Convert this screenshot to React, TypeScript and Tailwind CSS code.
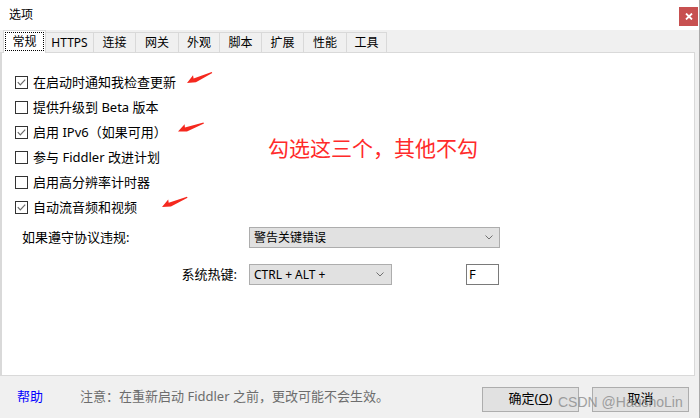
import React from "react";

const tabs: { label: string; w: number }[] = [
  { label: "HTTPS", w: 48 },
  { label: "连接", w: 42 },
  { label: "网关", w: 43 },
  { label: "外观", w: 41 },
  { label: "脚本", w: 42 },
  { label: "扩展", w: 42 },
  { label: "性能", w: 43 },
  { label: "工具", w: 40 },
];

const rows: { label: string; checked: boolean }[] = [
  { label: "在启动时通知我检查更新", checked: true },
  { label: "提供升级到 Beta 版本", checked: false },
  { label: "启用 IPv6（如果可用）", checked: true },
  { label: "参与 Fiddler 改进计划", checked: false },
  { label: "启用高分辨率计时器", checked: false },
  { label: "自动流音频和视频", checked: true },
];

function Box({ checked }: { checked: boolean }) {
  return (
    <span className="w-[13px] h-[13px] border border-[#333333] bg-white flex items-center justify-center shrink-0">
      {checked && (
        <svg width="11" height="11" viewBox="0 0 11 11">
          <path d="M1.8 5.2 L4.3 7.8 L9.2 2.6" stroke="#6a6a6a" strokeWidth="1.2" fill="none" />
        </svg>
      )}
    </span>
  );
}

function Chevron() {
  return (
    <svg width="8" height="5" viewBox="0 0 8 5">
      <path d="M0.5 0.5 L4 4 L7.5 0.5" stroke="#707070" strokeWidth="1" fill="none" />
    </svg>
  );
}

function Arrow({ x, y, a }: { x: number; y: number; a: number }) {
  return (
    <path
      transform={`translate(${x} ${y}) rotate(${a})`}
      d="M0,0 L8.5,-4.8 L7.8,-1.6 L27,-0.7 L27.2,0.4 L8.5,2.8 Z"
      fill="#f5281e"
    />
  );
}

export default function App() {
  return (
    <div className="w-[700px] h-[418px] bg-[#f0f0f0] flex flex-col relative overflow-hidden border-r border-[#a9a9a9] font-['Noto_Sans','Noto_Sans_CJK_SC',sans-serif] text-black">
      {/* title bar */}
      <div className="h-[30px] bg-white flex justify-between pl-[9px] pr-[1px]">
        <span className="text-[12px] leading-[30px]">选项</span>
        <div className="w-[19px] h-[19px] mt-[7px] bg-[#c75050] flex items-center justify-center">
          <svg width="8" height="7" viewBox="0 0 8 7">
            <path d="M1 0.5 L7 6.5 M7 0.5 L1 6.5" stroke="white" strokeWidth="1.8" />
          </svg>
        </div>
      </div>

      {/* tabs */}
      <div className="h-[22px] flex items-end pl-[3px] relative z-10">
        <div className="w-[43px] h-[23px] -mb-px bg-white border-l border-t border-r border-[#d9d9d9] px-[1px] pt-[1px] pb-[2px]">
          <div className="w-full h-full border border-dotted border-black flex items-center justify-center text-[12px] leading-none">
            常规
          </div>
        </div>
        {tabs.map((t) => (
          <div
            key={t.label}
            style={{ width: t.w }}
            className="h-[20px] bg-[#f0f0f0] border-t border-r border-[#d9d9d9] flex items-center justify-center text-[12px] leading-none"
          >
            {t.label}
          </div>
        ))}
      </div>

      {/* panel */}
      <div className="h-[324px] bg-white border-l-2 border-t border-r border-b border-[#d9d9d9] mr-[4px] pt-[17px]">
        <div className="pl-[13px] flex flex-col">
          {rows.map((r) => (
            <div key={r.label} className="h-[25px] flex items-center gap-[5px] text-[13px]">
              <Box checked={r.checked} />
              <span>{r.label}</span>
            </div>
          ))}
        </div>

        <div className="mt-[7px] pl-[20px] flex items-center text-[13px]">
          <span className="w-[227px]">如果遵守协议违规:</span>
          <div className="w-[251px] h-[21px] bg-[#e1e1e1] border border-[#adadad] flex items-center justify-between pl-[4px] pr-[6px] text-[12px]">
            <span>警告关键错误</span>
            <Chevron />
          </div>
        </div>

        <div className="mt-[16px] pl-[20px] flex items-center text-[13px]">
          <span className="w-[227px] text-right pr-[12px]">系统热键:</span>
          <div className="w-[143px] h-[21px] bg-[#e1e1e1] border border-[#adadad] flex items-center justify-between pl-[4px] pr-[7px] text-[12px]">
            <span>CTRL + ALT +</span>
            <Chevron />
          </div>
          <div className="ml-[74px] w-[33px] h-[21px] bg-white border border-[#7a7a7a] flex items-center pl-[2px] text-[13px]">
            F
          </div>
        </div>
      </div>

      {/* bottom bar */}
      <div className="h-[42px] flex items-center">
        <span className="ml-[17px] text-[13px] text-[#0000ff]">帮助</span>
        <span className="ml-[37px] text-[13px] text-[#6d6d6d]">注意：在重新启动 Fiddler 之前，更改可能不会生效。</span>
        <div className="ml-auto mr-[10px] mt-[4px] flex gap-[13px]">
          <div className="w-[97px] h-[25px] bg-[#e1e1e1] border border-[#adadad] flex items-center justify-center text-[13px]">
            确定(<span className="underline">O</span>)
          </div>
          <div className="w-[97px] h-[25px] bg-[#e1e1e1] border border-[#adadad] flex items-center justify-center text-[13px]">
            取消
          </div>
        </div>
      </div>

      {/* annotations */}
      <svg className="absolute left-0 top-0 pointer-events-none" width="700" height="418">
        <Arrow x={187} y={83} a={-22.5} />
        <Arrow x={178} y={131.5} a={-18} />
        <Arrow x={162} y={207} a={-21} />
      </svg>
      <div className="absolute left-[268px] top-[135px] text-[21px] leading-[26px] text-[#ff2a2a] pointer-events-none">
        勾选这三个，其他不勾
      </div>
      <div className="absolute left-[558px] top-[393px] text-[14px] leading-[18px] text-[#8c8c8c] opacity-80 font-['Liberation_Sans',sans-serif] pointer-events-none">
        CSDN @HaushoLin
      </div>
    </div>
  );
}
